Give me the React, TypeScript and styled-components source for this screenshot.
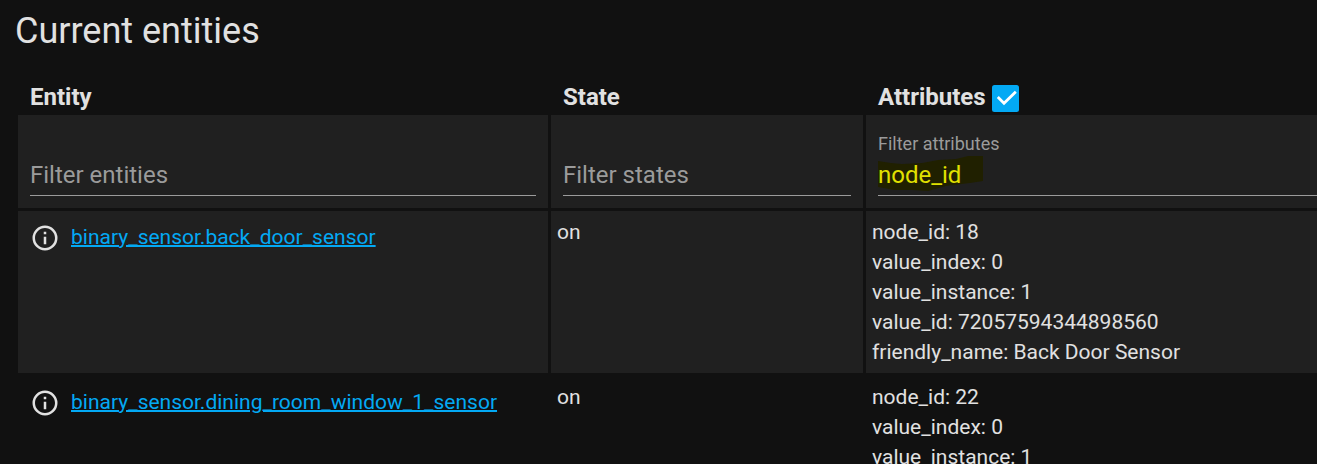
import React from "react";
import styled, { createGlobalStyle } from "styled-components";

const GlobalStyle = createGlobalStyle`
  * { box-sizing: border-box; }
  html, body { margin: 0; padding: 0; background: #111111; overflow: hidden; }
  body { font-family: Roboto, "Noto Sans", sans-serif; color: #e1e1e1; }
`;

const Page = styled.main`
  height: 464px;
  width: 100%;
  overflow: hidden;
  background: #111111;
`;

const Title = styled.h1`
  margin: 0;
  padding: 7px 0 0 15px;
  height: 79px;
  font-size: 36px;
  line-height: 48px;
  font-weight: 400;
`;

const Table = styled.div`
  display: flex;
  flex-direction: column;
  gap: 3px;
  padding-left: 18px;
`;

const Row = styled.div<{ $height: number }>`
  display: grid;
  grid-template-columns: 530px 312px 620px;
  column-gap: 3px;
  height: ${(p) => p.$height}px;
`;

const HeaderCell = styled.div`
  display: flex;
  align-items: center;
  gap: 6px;
  padding: 3px 12px 0;
  font-size: 24px;
  line-height: 30px;
  font-weight: 700;
`;

const FilterCell = styled.div`
  display: flex;
  flex-direction: column;
  padding: 16px 12px 12px;
  background: #202020;
`;

const FilterLabel = styled.label`
  height: 26px;
  font-size: 18px;
  line-height: 26px;
  color: #9b9b9b;
`;

const FilterField = styled.div`
  height: 39px;
  border-bottom: 1px solid #9b9b9b;
  font-size: 24px;
  line-height: 36px;
  color: #9b9b9b;
`;

const Marked = styled.span`
  position: relative;
  display: inline-block;
  color: #e1e100;
`;

const MarkerStroke = styled.svg`
  position: absolute;
  left: 0;
  top: -2px;
`;

const MarkedText = styled.span`
  position: relative;
`;

const Cell = styled.div<{ $shaded?: boolean }>`
  padding: 6px;
  font-size: 21px;
  line-height: 30px;
  white-space: nowrap;
  background: ${(p) => (p.$shaded ? "#202020" : "transparent")};
`;

const EntityLine = styled.div`
  display: flex;
  align-items: center;
  gap: 11px;
  height: 42px;
  padding-left: 6px;
`;

const EntityLink = styled.a`
  padding-bottom: 2px;
  color: #03a9f4;
  text-decoration: underline;
  text-decoration-thickness: 2px;
`;

const CheckBox = styled.svg`
  margin-top: 2px;
`;

const InfoIcon = () => (
  <svg width="30" height="30" viewBox="0 0 24 24" fill="#e1e1e1">
    <path d="M11,9H13V7H11M12,20C7.59,20 4,16.41 4,12C4,7.59 7.59,4 12,4C16.41,4 20,7.59 20,12C20,16.41 16.41,20 12,20M12,2A10,10 0 0,0 2,12A10,10 0 0,0 12,22A10,10 0 0,0 22,12A10,10 0 0,0 12,2M11,17H13V11H11V17Z" />
  </svg>
);

const CheckIcon = () => (
  <CheckBox width="27" height="27" viewBox="0 0 27 27">
    <rect width="27" height="27" rx="2.5" fill="#03a9f4" />
    <path d="M5.8 12.1 L12 18.3 L23.8 6.8" fill="none" stroke="#fff" strokeWidth="2.8" />
  </CheckBox>
);

const entities = [
  {
    id: "binary_sensor.back_door_sensor",
    state: "on",
    attributes: [
      "node_id: 18",
      "value_index: 0",
      "value_instance: 1",
      "value_id: 72057594344898560",
      "friendly_name: Back Door Sensor",
    ],
  },
  {
    id: "binary_sensor.dining_room_window_1_sensor",
    state: "on",
    attributes: ["node_id: 22", "value_index: 0", "value_instance: 1"],
  },
];

export default function App() {
  return (
    <Page>
      <GlobalStyle />
      <Title>Current entities</Title>
      <Table>
        <Row $height={33}>
          <HeaderCell>Entity</HeaderCell>
          <HeaderCell>State</HeaderCell>
          <HeaderCell>
            Attributes <CheckIcon />
          </HeaderCell>
        </Row>
        <Row $height={93}>
          <FilterCell>
            <FilterLabel />
            <FilterField>Filter entities</FilterField>
          </FilterCell>
          <FilterCell>
            <FilterLabel />
            <FilterField>Filter states</FilterField>
          </FilterCell>
          <FilterCell>
            <FilterLabel>Filter attributes</FilterLabel>
            <FilterField>
              <Marked>
                <MarkerStroke width="106" height="38" viewBox="0 0 106 38">
                  <path
                    d="M0 6 L13 8 L24 9 L44 8 L60 5 L78 4 L90 1 L105 1 L105 26 L92 28 L68 31 L50 36 L34 35 L16 35 L0 32 Z"
                    fill="#202000"
                  />
                </MarkerStroke>
                <MarkedText>node_id</MarkedText>
              </Marked>
            </FilterField>
          </FilterCell>
        </Row>
        {entities.map((entity, index) => (
          <Row key={entity.id} $height={162}>
            <Cell $shaded={index % 2 === 0}>
              <EntityLine>
                <InfoIcon />
                <EntityLink>{entity.id}</EntityLink>
              </EntityLine>
            </Cell>
            <Cell $shaded={index % 2 === 0}>{entity.state}</Cell>
            <Cell $shaded={index % 2 === 0}>
              {entity.attributes.map((line) => (
                <div key={line}>{line}</div>
              ))}
            </Cell>
          </Row>
        ))}
      </Table>
    </Page>
  );
}
